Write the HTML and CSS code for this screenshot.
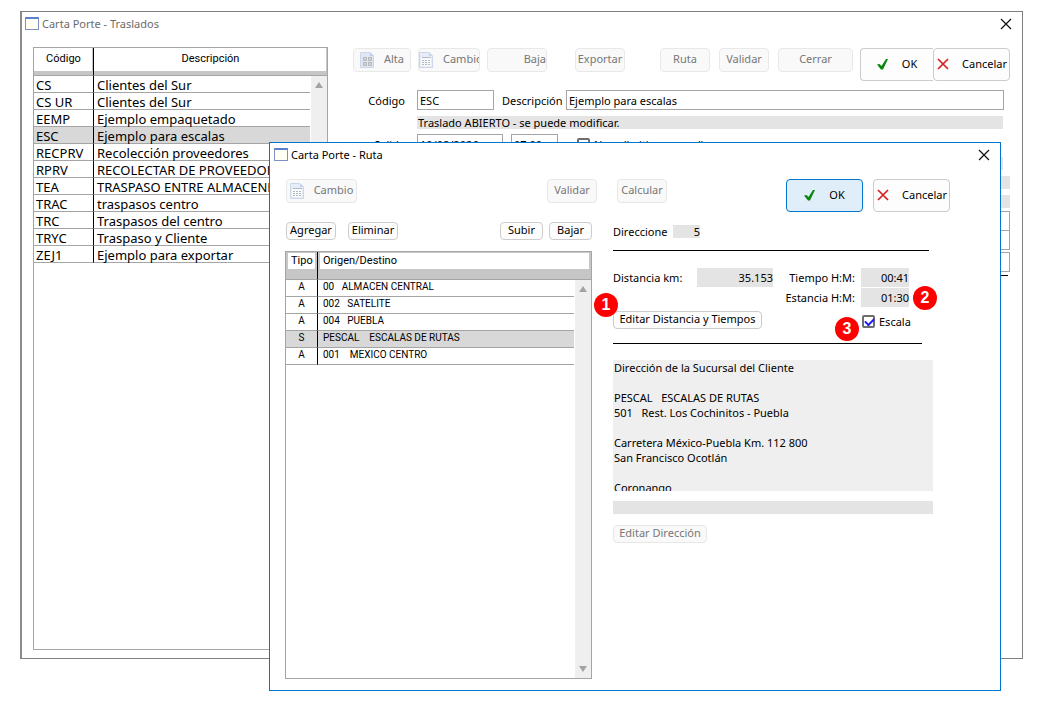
FILE: index.html
```html
<!DOCTYPE html>
<html lang="es">
<head>
  <meta charset="UTF-8">
  <meta name="viewport" content="width=device-width, initial-scale=1.0">
  <title>Carta Porte</title>
  <link rel="stylesheet" href="styles.css">
</head>
<body>
  <!-- Shared icons -->
  <svg class="sprite" aria-hidden="true">
    <symbol id="close" viewBox="0 0 12 12"><path d="M1 1l10 10M11 1L1 11" fill="none" stroke="#111" stroke-width="1.2"/></symbol>
    <symbol id="check" viewBox="0 0 12 12"><path d="M0 6.500l2.500-.5L4.500 8 9 1h2L6 11.500H4z" fill="#0a870a"/></symbol>
    <symbol id="cross" viewBox="0 0 12 12"><path d="M1 1l10 10M11 1L1 11" fill="none" stroke="#d42020" stroke-width="1.700"/></symbol>
    <symbol id="sheet" viewBox="0 0 14 16">
      <path d="M.5.5h9.500l3.500 3.500v11.500H.5z" fill="#e6edf8" stroke="#ccd6ea"/>
      <path d="M10 .5v3.500h3.500z" fill="#c3d3ef"/>
      <path d="M2 6h10v8H2z" fill="#fafbfd"/>
      <path d="M3 5.500h9M3 8.500h2M6 8.500h2M9 8.500h2M3 10.500h2M6 10.500h2M9 10.500h2M3 12.500h2M6 12.500h2M9 12.500h2" stroke="#b4b8c0"/>
    </symbol>
    <symbol id="grid" viewBox="0 0 14 16">
      <path d="M.5.5h9.500l3.500 3.500v11.500H.5z" fill="#dfe7f5" stroke="#ccd6ea"/>
      <path d="M10 .5v3.500h3.500z" fill="#b9cdf0"/>
      <path d="M3.500 5.500h3v3h-3zM8.500 5.500h3v3h-3zM3.500 10.500h3v3h-3zM8.500 10.500h3v3h-3z" fill="#d5d5d5" stroke="#b5b5b5"/>
    </symbol>
  </svg>

  <main class="desktop">
    <!-- Main window -->
    <section class="window window-main">
      <header class="titlebar">
        <span class="app-icon"></span>
        <h1>Carta Porte - Traslados</h1>
        <button class="close" aria-label="Cerrar ventana"><svg><use href="#close"/></svg></button>
      </header>
      <div class="main-body">
        <div class="list list-main">
          <table>
            <thead>
              <tr><th class="col-code">Código</th><th>Descripción</th></tr>
            </thead>
            <tbody>
              <tr><td>CS</td><td>Clientes del Sur</td></tr>
              <tr><td>CS UR</td><td>Clientes del Sur</td></tr>
              <tr><td>EEMP</td><td>Ejemplo empaquetado</td></tr>
              <tr class="selected"><td>ESC</td><td>Ejemplo para escalas</td></tr>
              <tr><td>RECPRV</td><td>Recolección proveedores</td></tr>
              <tr><td>RPRV</td><td>RECOLECTAR DE PROVEEDORES</td></tr>
              <tr><td>TEA</td><td>TRASPASO ENTRE ALMACENES</td></tr>
              <tr><td>TRAC</td><td>traspasos centro</td></tr>
              <tr><td>TRC</td><td>Traspasos del centro</td></tr>
              <tr><td>TRYC</td><td>Traspaso y Cliente</td></tr>
              <tr><td>ZEJ1</td><td>Ejemplo para exportar</td></tr>
            </tbody>
          </table>
          <div class="scrollbar"><i class="up"></i><i class="down"></i></div>
        </div>

        <div class="main-form">
          <div class="toolbar">
            <div class="group group-edit">
              <button class="btn tool w-alta" disabled><svg class="doc"><use href="#grid"/></svg>Alta</button>
              <button class="btn tool w-cambio" disabled><svg class="doc"><use href="#sheet"/></svg>Cambio</button>
              <button class="btn tool w-baja" disabled>Baja</button>
            </div>
            <button class="btn tool" disabled>Exportar</button>
            <div class="group group-route">
              <button class="btn tool" disabled>Ruta</button>
              <button class="btn tool" disabled>Validar</button>
              <button class="btn tool w-cerrar" disabled>Cerrar</button>
            </div>
            <div class="group group-confirm">
              <button class="btn action ok"><svg><use href="#check"/></svg>OK</button>
              <button class="btn action cancel"><svg><use href="#cross"/></svg>Cancelar</button>
            </div>
          </div>

          <div class="row">
            <label class="side" for="codigo">Código</label>
            <input class="field w-code" id="codigo" value="ESC">
            <label class="w-desc" for="descripcion">Descripción</label>
            <input class="field grow" id="descripcion" value="Ejemplo para escalas">
          </div>
          <div class="row row-state">
            <span class="side"></span>
            <input class="readonly grow" aria-label="Estado" value="Traslado ABIERTO - se puede modificar." readonly>
          </div>
          <div class="row row-date">
            <label class="side" for="salida">Salida</label>
            <input class="field w-date" id="salida" value="10/08/2026">
            <input class="field w-time" aria-label="Hora de salida" value="07:00">
            <label class="check"><input type="checkbox">No valle (tiempo real)</label>
          </div>
          <div class="extra">
            <input class="readonly short" aria-label="Vehículo" readonly>
            <input class="readonly" aria-label="Operador" readonly>
            <input class="readonly" aria-label="Remolque" readonly>
            <div class="inputs">
              <input class="field" aria-label="Notas 1">
              <input class="field" aria-label="Notas 2">
              <input class="field last" aria-label="Notas 3">
            </div>
            <hr>
          </div>
        </div>
      </div>
    </section>

    <!-- Route dialog -->
    <section class="window window-route">
      <header class="titlebar">
        <span class="app-icon"></span>
        <h2>Carta Porte - Ruta</h2>
        <button class="close" aria-label="Cerrar ventana"><svg><use href="#close"/></svg></button>
      </header>
      <div class="route-body">
        <div class="route-left">
          <div class="bar">
            <button class="btn tool w-change" disabled><svg class="doc"><use href="#sheet"/></svg>Cambio</button>
            <button class="btn tool push last" disabled>Validar</button>
          </div>
          <div class="bar bar-stops">
            <button class="btn small">Agregar</button>
            <button class="btn small">Eliminar</button>
            <button class="btn small narrow push">Subir</button>
            <button class="btn small narrow">Bajar</button>
          </div>
          <div class="list list-route">
            <table>
              <thead>
                <tr><th class="col-type">Tipo</th><th>Origen/Destino</th></tr>
              </thead>
              <tbody>
                <tr><td>A</td><td>00   ALMACEN CENTRAL</td></tr>
                <tr><td>A</td><td>002   SATELITE</td></tr>
                <tr><td>A</td><td>004   PUEBLA</td></tr>
                <tr class="selected"><td>S</td><td>PESCAL    ESCALAS DE RUTAS</td></tr>
                <tr><td>A</td><td>001    MEXICO CENTRO</td></tr>
              </tbody>
            </table>
            <div class="scrollbar"><i class="up"></i><i class="down"></i></div>
          </div>
        </div>

        <div class="route-right">
          <div class="bar bar-confirm">
            <button class="btn tool" disabled>Calcular</button>
            <div class="group">
              <button class="btn action ok default"><svg><use href="#check"/></svg>OK</button>
              <button class="btn action cancel"><svg><use href="#cross"/></svg>Cancelar</button>
            </div>
          </div>
          <div class="count">
            <label for="direcciones">Direccione</label>
            <input class="readonly" id="direcciones" value="5" readonly>
          </div>
          <hr class="wide">

          <div class="metrics">
            <label for="distancia">Distancia km:</label>
            <input class="readonly" id="distancia" value="35.153" readonly>
            <label class="right" for="tiempo">Tiempo H:M:</label>
            <input class="readonly" id="tiempo" value="00:41" readonly>
            <label class="right estancia" for="estancia">Estancia H:M:</label>
            <div class="marked">
              <input class="readonly" id="estancia" value="01:30" readonly>
              <span class="badge badge-2">2</span>
            </div>
          </div>
          <div class="edit-row">
            <div class="marked">
              <button class="btn small w-edit">Editar Distancia y Tiempos</button>
              <span class="badge badge-1">1</span>
            </div>
            <div class="marked">
              <label class="check"><input type="checkbox" checked>Escala</label>
              <span class="badge badge-3">3</span>
            </div>
          </div>
          <hr>

          <textarea class="address" aria-label="Dirección" readonly>Dirección de la Sucursal del Cliente

PESCAL   ESCALAS DE RUTAS
501   Rest. Los Cochinitos - Puebla

Carretera México-Puebla Km. 112 800
San Francisco Ocotlán

Coronango</textarea>
          <input class="readonly note" aria-label="Observaciones" readonly>
          <button class="btn small w-address" disabled>Editar Dirección</button>
        </div>
      </div>
    </section>
  </main>
</body>
</html>
```
FILE: styles.css
```css
* {
  box-sizing: border-box;
}

body {
  margin: 0;
  background: #fff;
  color: #000;
  font-family: "Noto Sans", "Open Sans", sans-serif;
  font-size: 11px;
}

button, input, textarea {
  font: inherit;
  color: inherit;
  margin: 0;
}

hr {
  border: 0;
  border-top: 1px solid #000;
  margin: 0;
}

.sprite {
  display: none;
}

.desktop {
  position: relative;
  min-height: 100vh;
  overflow: hidden;
}

/* Windows */
.window {
  position: absolute;
  display: flex;
  flex-direction: column;
  background: #fff;
}

.window-main {
  inset: 11px 16px 45px 20px;
  border: 1px solid #7f7f7f;
  border-left: 2px solid #8c8c8c;
}

.window-route {
  inset: 142px 38px 13px 269px;
  border: 1px solid #0078d0;
}

.titlebar {
  display: flex;
  align-items: center;
  height: 23px;
  padding: 0 10px 0 4px;
}

.window-main .titlebar {
  padding-left: 3px;
}

.titlebar h1, .titlebar h2 {
  flex: 1;
  margin: 0 0 0 3px;
  font-size: 11px;
  font-weight: normal;
}

.titlebar h1 {
  color: #6b6b6b;
}

.app-icon {
  width: 14px;
  height: 13px;
  border: 1px solid #7d8fc4;
  border-top: 2px solid #5b80d0;
  background: #fffff4;
}

.close {
  width: 12px;
  height: 12px;
  padding: 0;
  border: 0;
  background: none;
}

.close svg {
  display: block;
  width: 12px;
  height: 12px;
}

/* Buttons */
.btn {
  display: flex;
  align-items: center;
  justify-content: center;
  flex: none;
  padding: 0;
  border: 1px solid #ccc;
  border-radius: 4px;
  background: #fdfdfd;
  white-space: nowrap;
  overflow: hidden;
}

.btn:disabled {
  color: #777;
  border-color: #e8e8e8;
  background: #f9f9f9;
}

.tool {
  width: 50px;
  height: 24px;
  padding-bottom: 3px;
}

.small {
  width: 50px;
  height: 18px;
  padding-bottom: 3px;
}

.action {
  width: 77px;
  height: 33px;
  padding-bottom: 2px;
}

.action svg {
  width: 12px;
  height: 12px;
  margin-right: 13px;
}

.action.cancel {
  justify-content: space-between;
  padding: 0 2px 2px 3px;
}

.action.cancel svg {
  margin-right: 0;
}

.action.default {
  border-color: #0078d0;
  background: #e0eef9;
}

.doc {
  flex: none;
  width: 14px;
  height: 16px;
  margin: 3px 10px 0 0;
}

.w-alta { width: 58px; }
.w-cambio { width: 62px; justify-content: flex-start; }
.w-baja { width: 60px; justify-content: flex-end; }
.w-cerrar { width: 75px; }
.w-change { width: 71px; }
.w-edit { width: 149px; }
.w-address { width: 94px; }
.narrow { width: 43px; }

.group {
  display: flex;
  gap: 10px;
}

.push {
  margin-left: auto;
}

.route-left .last {
  margin-right: -5px;
}

/* Fields */
.field {
  min-width: 0;
  height: 20px;
  padding: 0 2px;
  border: 1px solid #a5a5a5;
  background: #fff;
}

.readonly {
  min-width: 0;
  height: 13px;
  padding: 0 0 0 1px;
  border: 0;
  border-radius: 0;
  background: #e4e4e4;
}

.grow {
  flex: 1;
}

.check {
  display: flex;
  align-items: center;
  gap: 4px;
}

.check input {
  appearance: none;
  position: relative;
  width: 13px;
  height: 13px;
  border: 2px solid #6e6e6e;
  border-radius: 2px;
  background: #fff;
}

.check input:checked::after {
  content: "";
  position: absolute;
  left: 1px;
  top: 1px;
  width: 7px;
  height: 4px;
  border: solid #1a1aff;
  border-width: 0 0 2px 2px;
  transform: rotate(-45deg);
}

/* Lists */
.list {
  position: relative;
  border: 1px solid #a5a5a5;
  background: #fff;
}

.list table {
  width: 100%;
  border-collapse: separate;
  border-spacing: 0;
  table-layout: fixed;
}

.list th {
  height: 28px;
  padding: 0;
  font-family: Roboto, sans-serif;
  font-size: 11px;
  line-height: 13px;
  font-weight: normal;
  border-bottom: 1px solid #a5a5a5;
}

.list td {
  height: 17px;
  white-space: pre;
  border-bottom: 1px solid #a5a5a5;
}

.list th:first-child, .list td:first-child {
  border-right: 1px solid #000;
}

.list .selected td {
  background: #d8d8d8;
}

.scrollbar {
  position: absolute;
  top: 28px;
  right: 0;
  bottom: 0;
  display: flex;
  flex-direction: column;
  justify-content: space-between;
  align-items: center;
  width: 17px;
  padding: 6px 0;
  border-left: 1px solid #fff;
  background: #efefef;
}

.scrollbar i {
  border: 4px solid transparent;
}

.scrollbar .up {
  border-top: 0;
  border-bottom: 6px solid #a3a3a3;
}

.scrollbar .down {
  border-bottom: 0;
  border-top: 6px solid #a3a3a3;
}

.list-main {
  flex: none;
  width: 295px;
}

.list-main th {
  box-shadow: inset -1px -4px #c6c6c6;
  padding-bottom: 6px;
}

.list-main td {
  padding: 2px 2px 0;
  font-size: 13px;
  line-height: 14px;
}

.list-main td + td {
  padding-left: 3px;
}

.col-code {
  width: 60px;
}

.list-route {
  flex: 1;
}

.list-route th {
  background: linear-gradient(#fff, #fff) 2px 1px / calc(100% - 4px) 16px no-repeat #c6c6c6;
  padding: 0 0 10px 5px;
  text-align: left;
}

.list-route td {
  padding: 0 0 2px 5px;
  font-family: Roboto, sans-serif;
  font-size: 10px;
  line-height: 14px;
}

.list-route td:first-child {
  padding-left: 0;
  text-align: center;
}

.col-type {
  width: 32px;
}

/* Main window */
.main-body {
  flex: 1;
  display: flex;
  gap: 25px;
  padding: 12px 12px 8px 11px;
}

.main-form {
  flex: 1;
  min-width: 0;
}

.toolbar {
  display: flex;
  align-items: flex-start;
  padding: 1px 0 9px;
}

.group-edit {
  gap: 7px;
  margin-right: 28px;
}

.group-route {
  gap: 9px;
  margin-left: 35px;
}

.group-confirm {
  gap: 0;
  margin-left: auto;
}

.group-confirm .ok {
  width: 73px;
  border-right: 0;
  border-radius: 4px 0 0 4px;
}

.row {
  display: flex;
  align-items: center;
  gap: 8px;
  padding-right: 6px;
}

.row .side {
  flex: none;
  width: 64px;
  margin-right: -8px;
  padding-right: 12px;
  text-align: right;
}

.row label + .grow {
  margin-left: -8px;
}

.w-code { width: 77px; }
.w-desc { width: 64px; }
.w-date { width: 86px; }
.w-time { width: 47px; }

.row-state {
  padding: 6px 7px 5px 0;
}

.row-date .check {
  margin-left: 11px;
}

.extra {
  display: flex;
  flex-direction: column;
  gap: 6px;
  margin: 3px 0 0 64px;
}

.extra .short {
  margin-right: 7px;
}

.inputs {
  display: flex;
  flex-direction: column;
  margin-top: -3px;
}

.inputs .field + .field {
  margin-top: -1px;
}

.inputs .field.last {
  margin-top: 2px;
}

.extra hr {
  margin: -3px 2px 0 0;
}

/* Route dialog */
.route-body {
  flex: 1;
  display: flex;
  gap: 21px;
  padding: 13px 50px 11px 15px;
}

.route-left {
  flex: none;
  display: flex;
  flex-direction: column;
  width: 307px;
}

.route-right {
  flex: 1;
  min-width: 0;
}

.bar {
  display: flex;
  align-items: flex-start;
}

.route-left .bar {
  padding-left: 1px;
}

.bar-stops {
  gap: 12px;
  padding: 19px 0 11px;
}

.bar-stops .narrow + .narrow {
  margin-left: -6px;
}

.bar-confirm {
  justify-content: space-between;
  padding-left: 4px;
}

.count {
  display: flex;
  align-items: center;
  height: 38px;
}

.count label {
  width: 60px;
}

.count input {
  width: 27px;
  text-align: right;
}

.route-right hr {
  max-width: 309px;
}

.route-right hr.wide {
  max-width: 316px;
}

.metrics {
  display: grid;
  grid-template-columns: 84px 76px 88px 48px;
  grid-auto-rows: 19px;
  row-gap: 1px;
  align-items: center;
  padding-top: 17px;
}

.metrics .readonly {
  width: 100%;
  height: 19px;
  text-align: right;
}

.metrics .right {
  padding-right: 6px;
  text-align: right;
  white-space: nowrap;
}

.metrics .estancia {
  grid-column: 3;
}

.marked {
  position: relative;
}

.badge {
  position: absolute;
  width: 24px;
  height: 24px;
  border-radius: 50%;
  background: #f00;
  color: #fff;
  font: bold 16px/24px "Liberation Sans", Arial, sans-serif;
  text-align: center;
}

.badge-1 { left: -19px; top: -18px; }
.badge-2 { left: 52px; top: -2px; }
.badge-3 { left: -27px; top: 6px; }

.edit-row {
  display: flex;
  gap: 100px;
  padding: 4px 0 14px;
}

.edit-row .check {
  padding-top: 3px;
}

.address {
  display: block;
  width: 100%;
  max-width: 320px;
  height: 131px;
  margin-top: 16px;
  padding: 0 1px;
  border: 0;
  background: #efefef;
  line-height: 15px;
  resize: none;
  overflow: hidden;
}

.note {
  display: block;
  width: 100%;
  max-width: 320px;
  margin: 10px 0 11px;
}
```
